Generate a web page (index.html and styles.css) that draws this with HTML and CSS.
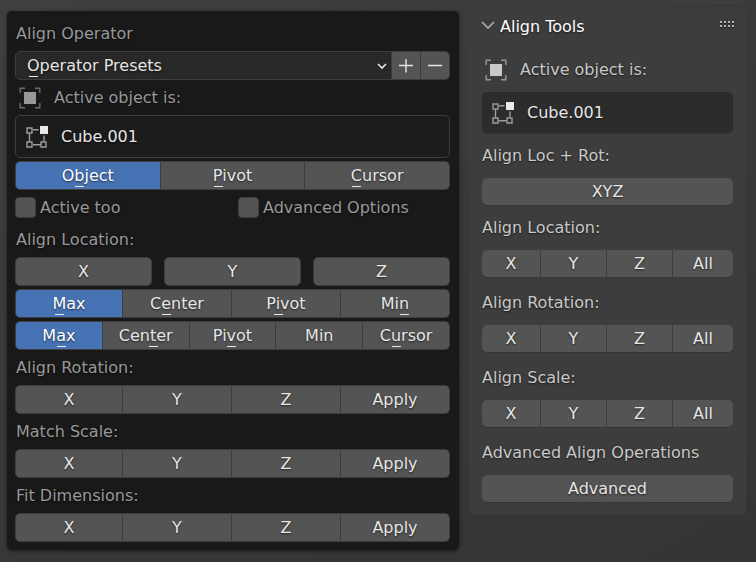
FILE: index.html
```html
<!DOCTYPE html>
<html lang="en">
<head>
<meta charset="utf-8">
<title>Align Tools</title>
<link rel="stylesheet" href="styles.css">
</head>
<body>
<svg class="defs" aria-hidden="true">
  <symbol id="icon-object" viewBox="0 0 22 22">
    <path class="dim" d="M1.200 6V1.200H6M16 1.200h4.800V6M20.800 16v4.800H16M6 20.800H1.200V16"/>
    <rect class="solid" x="5" y="5" width="12" height="12"/>
  </symbol>
  <symbol id="icon-mesh" viewBox="0 0 22 22">
    <path class="line" d="M7 3.800h5.500M3.500 7.500v8M7 18.700h8M18 9.500V15"/>
    <path class="line" d="M1 2h5v5H1zM1 16h5v5H1zM15 16h5v5h-5z"/>
    <rect class="bright" x="14" y="0" width="8" height="8"/>
  </symbol>
</svg>
<main class="workspace">
  <form class="popup">
    <h2 class="text">Align Operator</h2>
    <div class="presets">
      <div class="preset-field">
        <select aria-label="Operator Presets"><option>Operator Presets</option></select>
        <span class="preset-mark"></span>
        <svg class="caret" viewBox="0 0 10 7" aria-hidden="true"><path d="M1 1l4 4 4-4"/></svg>
      </div>
      <button type="button" aria-label="Add preset"><svg class="sign" viewBox="0 0 14 14" aria-hidden="true"><path d="M0 6.500h14M7 0v13.500"/></svg></button>
      <button type="button" aria-label="Remove preset"><svg class="sign" viewBox="0 0 14 14" aria-hidden="true"><path d="M0 6.500h14"/></svg></button>
    </div>
    <div class="text active-label"><svg class="icon" aria-hidden="true"><use href="#icon-object"/></svg>Active object is:</div>
    <div class="object-box"><svg class="icon" aria-hidden="true"><use href="#icon-mesh"/></svg>Cube.001</div>
    <div class="segments three" role="radiogroup" aria-label="Align mode">
      <label><input type="radio" name="mode" checked><span>O<u>b</u>ject</span></label>
      <label><input type="radio" name="mode"><span><u>P</u>ivot</span></label>
      <label><input type="radio" name="mode"><span><u>C</u>ursor</span></label>
    </div>
    <div class="checks">
      <label><input type="checkbox">Active too</label>
      <label><input type="checkbox">Advanced Options</label>
    </div>
    <h3 class="text">Align Location:</h3>
    <div class="axes">
      <button type="button">X</button>
      <button type="button">Y</button>
      <button type="button">Z</button>
    </div>
    <div class="segments four" role="radiogroup" aria-label="Active point">
      <label><input type="radio" name="from" checked><span><u>M</u>ax</span></label>
      <label><input type="radio" name="from"><span>C<u>e</u>nter</span></label>
      <label><input type="radio" name="from"><span>P<u>i</u>vot</span></label>
      <label><input type="radio" name="from"><span>Mi<u>n</u></span></label>
    </div>
    <div class="segments five" role="radiogroup" aria-label="Target point">
      <label><input type="radio" name="to" checked><span>M<u>a</u>x</span></label>
      <label><input type="radio" name="to"><span>Cen<u>t</u>er</span></label>
      <label><input type="radio" name="to"><span>Pi<u>v</u>ot</span></label>
      <label><input type="radio" name="to"><span>Min</span></label>
      <label><input type="radio" name="to"><span>C<u>u</u>rsor</span></label>
    </div>
    <h3 class="text">Align Rotation:</h3>
    <div class="segments four">
      <button type="button">X</button><button type="button">Y</button><button type="button">Z</button><button type="button">Apply</button>
    </div>
    <h3 class="text">Match Scale:</h3>
    <div class="segments four">
      <button type="button">X</button><button type="button">Y</button><button type="button">Z</button><button type="button">Apply</button>
    </div>
    <h3 class="text">Fit Dimensions:</h3>
    <div class="segments four">
      <button type="button">X</button><button type="button">Y</button><button type="button">Z</button><button type="button">Apply</button>
    </div>
  </form>

  <aside class="sidebar">
    <div class="panel-end"></div>
    <section class="panel">
      <header>
        <svg class="fold" viewBox="0 0 14 8" aria-hidden="true"><path d="M1 1l6 6 6-6"/></svg>
        <h2>Align Tools</h2>
        <svg class="grip" viewBox="0 0 14 8" aria-hidden="true">
          <path class="grip-shade" d="M0 2h14M0 6h14"/>
          <path class="grip-dots" d="M0 1h14M0 5h14"/>
        </svg>
      </header>
      <div class="panel-body">
        <div class="group">
          <div class="text active-label"><svg class="icon" aria-hidden="true"><use href="#icon-object"/></svg>Active object is:</div>
          <div class="object-box"><svg class="icon" aria-hidden="true"><use href="#icon-mesh"/></svg>Cube.001</div>
        </div>
        <div class="group">
          <h3 class="text">Align Loc + Rot:</h3>
          <div class="segments"><button type="button">XYZ</button></div>
        </div>
        <div class="group">
          <h3 class="text">Align Location:</h3>
          <div class="segments axes-all"><button type="button">X</button><button type="button">Y</button><button type="button">Z</button><button type="button">All</button></div>
        </div>
        <div class="group spaced">
          <h3 class="text">Align Rotation:</h3>
          <div class="segments axes-all"><button type="button">X</button><button type="button">Y</button><button type="button">Z</button><button type="button">All</button></div>
        </div>
        <div class="group spaced">
          <h3 class="text">Align Scale:</h3>
          <div class="segments axes-all"><button type="button">X</button><button type="button">Y</button><button type="button">Z</button><button type="button">All</button></div>
        </div>
        <div class="group spaced">
          <h3 class="text">Advanced Align Operations</h3>
          <div class="segments"><button type="button">Advanced</button></div>
        </div>
      </div>
    </section>
  </aside>
</main>
</body>
</html>
```
FILE: styles.css
```css
* { box-sizing: border-box; }

body {
  margin: 0;
  min-height: 100vh;
  background: linear-gradient(150deg, #404040, #383838 55%, #343434);
  color: #e6e6e6;
  font: 16px/20px "DejaVu Sans", sans-serif;
  text-shadow: 0 1px 2px rgba(0, 0, 0, 0.6);
}

h2, h3 { margin: 0; font-size: 16px; font-weight: normal; }

button, select, input { font: inherit; color: inherit; text-shadow: inherit; margin: 0; }

.defs { position: absolute; width: 0; height: 0; }

.workspace {
  display: grid;
  grid-template-columns: 452fr 277fr;
  gap: 10px;
  padding: 0 10px 0 7px;
  align-items: start;
}

.icon { width: 22px; height: 22px; flex: none; }
.dim { fill: none; stroke: currentColor; stroke-width: 1.4; opacity: 0.65; }
.solid { fill: currentColor; }
.line { fill: none; stroke: #9c9c9c; stroke-width: 1.4; }
.bright { fill: #e9e9e9; }

/* Operator popup */
.popup {
  display: grid;
  gap: 3px;
  margin-top: 11px;
  padding: 8px 9px 8px 8px;
  border-radius: 5px;
  background: #191919;
  box-shadow: 0 1px 4px rgba(0, 0, 0, 0.5);
}

.popup .text {
  display: flex;
  align-items: center;
  height: 29px;
  padding-left: 1px;
  color: #989898;
}

.popup .active-label { gap: 13px; padding-left: 4px; }

.object-box {
  display: flex;
  align-items: center;
  gap: 13px;
  height: 43px;
  padding-left: 10px;
  border: 1px solid #3d3d3d;
  border-radius: 5px;
  background: #1c1c1c;
}

.presets {
  display: grid;
  grid-template-columns: 1fr 28px 28px;
  gap: 1px;
  height: 29px;
  border: 1px solid #3d3d3d;
  border-radius: 5px;
  background: #3d3d3d;
  overflow: hidden;
}

.presets button {
  display: flex;
  align-items: center;
  justify-content: center;
  padding: 0;
  border: 0;
  background: #545454;
}

.preset-field { position: relative; display: grid; background: #282828; }

.preset-field select {
  appearance: none;
  width: 100%;
  padding: 0 28px 0 11px;
  border: 0;
  background: transparent;
}

.preset-mark { position: absolute; left: 13px; bottom: 2px; width: 9px; height: 1px; background: #e6e6e6; }
.caret { position: absolute; right: 4px; top: 11px; width: 10px; height: 7px; pointer-events: none; }
.caret path { fill: none; stroke: #e6e6e6; stroke-width: 1.6; }
.sign { width: 14px; height: 14px; }
.sign path { stroke: #e6e6e6; stroke-width: 1.4; }

.segments {
  display: grid;
  gap: 1px;
  height: 29px;
  border: 1px solid #3d3d3d;
  border-radius: 5px;
  background: #3d3d3d;
  overflow: hidden;
}

.three { grid-template-columns: repeat(3, 1fr); }
.four { grid-template-columns: 106fr 108fr 108fr 108fr; }
.five { grid-template-columns: repeat(5, 1fr); }
.axes-all { grid-template-columns: 58fr 65fr 65fr 60fr; }

.segments button,
.segments label {
  display: flex;
  align-items: center;
  justify-content: center;
  min-width: 0;
  padding: 0;
  border: 0;
  background: #545454;
}

.segments label:has(:checked) { background: #4772b3; color: #fff; }
.segments input { position: absolute; opacity: 0; pointer-events: none; }

.segments u { position: relative; text-decoration: none; }
.segments u::after {
  content: "";
  position: absolute;
  left: calc(50% - 4px);
  bottom: -2px;
  width: 9px;
  height: 1px;
  background: #e6e6e6;
}

.checks { display: grid; grid-template-columns: 223fr 212fr; height: 29px; color: #989898; }
.checks label { display: flex; align-items: center; gap: 4px; }
.checks input {
  appearance: none;
  width: 21px;
  height: 21px;
  border: 1px solid #3d3d3d;
  border-radius: 4px;
  background: #545454;
}
.checks input:checked { background: #4772b3; }

.axes { display: grid; grid-template-columns: repeat(3, 1fr); gap: 12px; height: 29px; }
.axes button { padding: 0; border: 1px solid #3d3d3d; border-radius: 5px; background: #545454; }

/* Sidebar */
.sidebar { display: grid; gap: 3px; }
.panel-end { height: 4px; border-radius: 0 0 5px 5px; background: #3d3d3d; }
.panel { padding: 0 12px 13px; border-radius: 5px; background: #3d3d3d; }

.panel header { display: flex; align-items: center; height: 39px; color: #fff; }
.panel header h2 { flex: 1; padding-left: 5px; }
.panel header svg { margin-bottom: 4px; }
.fold { width: 14px; height: 8px; }
.fold path { fill: none; stroke: #b4b4b4; stroke-width: 1.5; }
.grip { width: 14px; height: 8px; }
.grip path { fill: none; stroke-width: 2; stroke-dasharray: 2 2; }
.grip-dots { stroke: #b4b4b4; }
.grip-shade { stroke: #1c1c1c; }

.panel-body { display: grid; padding: 9px 1px 0; }
.group + .group { margin-top: 8px; }
.group + .spaced { margin-top: 11px; }
.panel .text { display: flex; align-items: center; height: 30px; margin-bottom: 7px; color: #c8c8c8; }
.panel .active-label { gap: 13px; padding-left: 3px; }
.panel .object-box { height: 41px; padding-left: 10px; border: 0; background: #2c2c2c; }
.panel .object-box, .panel .segments { box-shadow: 0 1px 1px #363636; }
.panel .segments { height: 27px; border: 0; }
```
